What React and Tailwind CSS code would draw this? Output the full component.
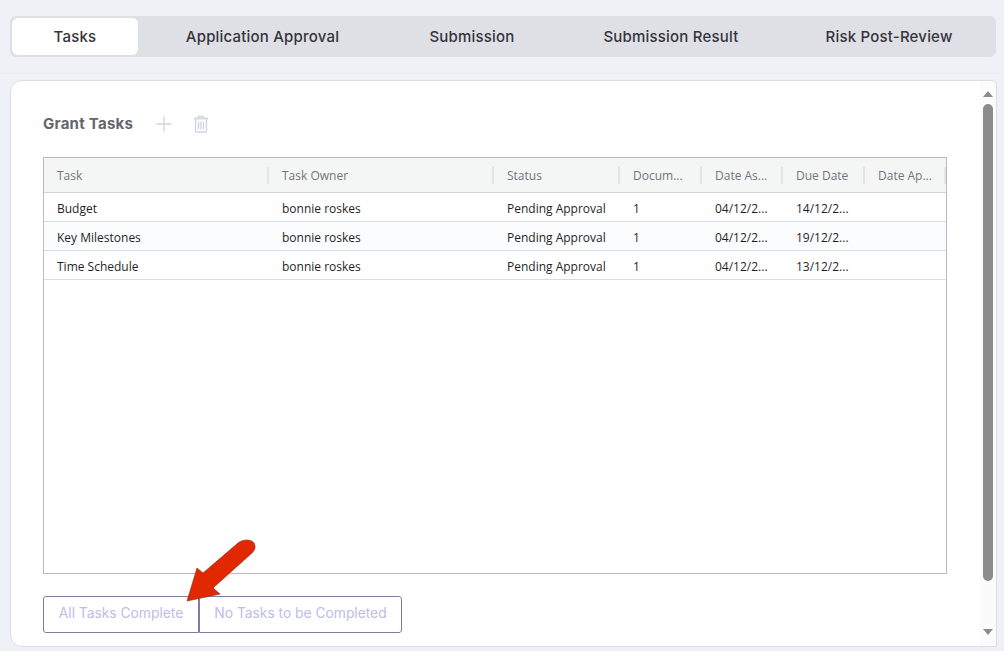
import React from 'react';

const tabs = [
  { label: 'Tasks', width: 'w-[126px]', active: true },
  { label: 'Application Approval', width: 'w-[249px]' },
  { label: 'Submission', width: 'w-[170px]' },
  { label: 'Submission Result', width: 'w-[228px]' },
  { label: 'Risk Post-Review', width: 'w-[208px]' },
];

const columns = ['Task', 'Task Owner', 'Status', 'Docum...', 'Date As...', 'Due Date', 'Date Ap...'];

const rows = [
  { task: 'Budget', due: '14/12/2...' },
  { task: 'Key Milestones', due: '19/12/2...', tint: true },
  { task: 'Time Schedule', due: '13/12/2...' },
];

const gridCols = 'grid grid-cols-[225px_225px_126px_82px_81px_82px_81px]';

const TrashIcon = () => (
  <svg width="16" height="18" viewBox="0 0 16 18" fill="none" stroke="#d3d4e6" strokeWidth="1.4">
    <path d="M1 3.5h14M5.5 3.5V1.5h5v2" />
    <path d="M2.5 3.5h11v12.5a1 1 0 0 1-1 1h-9a1 1 0 0 1-1-1z" />
    <path d="M5.5 6.5v8M8 6.5v8M10.5 6.5v8" />
  </svg>
);

const PlusIcon = () => (
  <svg width="16" height="16" viewBox="0 0 16 16" fill="none" stroke="#d3d4e0" strokeWidth="1.3">
    <path d="M8 .5v15M.5 8h15" />
  </svg>
);

const Arrow = () => (
  <svg className="absolute left-[180px] top-[535px]" width="80" height="72" viewBox="180 535 80 72">
    <path
      d="M187 601 L197 568 L203 573 L238 543 C243 539 251 539 254 543 C256 547 255 550 252 553 L213 588 L220 594 Z"
      fill="#e12800"
      stroke="#8a3a2a"
      strokeWidth="0.7"
      strokeLinejoin="round"
    />
  </svg>
);

const App = () => {
  return (
    <div className="relative h-[651px] w-[1004px] overflow-hidden bg-[#eff1f6] font-['Open_Sans',sans-serif] text-[12px] text-[#1f1f26]">
      {/* Tabs */}
      <div className="pt-4 pl-[10px]">
        <div className="flex h-[41px] w-[986px] items-center rounded-md bg-[#dfe0e6] pl-[2px] font-['Inter',sans-serif] text-[15px] font-medium tracking-[0.2px] text-[#34343c]">
          {tabs.map((tab) => (
            <div
              key={tab.label}
              className={`flex h-[37px] shrink-0 items-center justify-center rounded-md pt-[2px] ${tab.width} ${tab.active ? 'bg-white' : ''}`}
            >
              {tab.label}
            </div>
          ))}
        </div>
      </div>

      <div className="mt-4 h-px bg-[#eaebf0]" />

      {/* Card */}
      <div className="mt-[6px] ml-[10px] flex h-[567px] w-[987px] overflow-hidden rounded-tl-xl rounded-tr-md rounded-bl-xl border border-[#dcdde3] bg-white">
        <div className="flex w-[969px] shrink-0 flex-col pt-[33px] pl-[32px]">
          <div className="flex h-[20px] items-center">
            <h2 className="w-[113px] font-['Inter',sans-serif] text-[15px] font-bold tracking-[0.25px] text-[#65656d]">Grant Tasks</h2>
            <PlusIcon />
            <span className="ml-[21px]">
              <TrashIcon />
            </span>
          </div>

          {/* Table */}
          <div className="mt-[23px] flex h-[417px] w-[904px] flex-col border border-[#b9bac3]">
            <div className={`${gridCols} h-[35px] shrink-0 items-center border-b border-[#d2d4d8] bg-[#f4f6f6] text-[#74747c]`}>
              {columns.map((col) => (
                <div key={col} className="flex h-[17px] items-center border-r-2 border-[#e2e4e6] pt-[2px] pl-[13px]">
                  {col}
                </div>
              ))}
            </div>
            {rows.map((row) => (
              <div
                key={row.task}
                className={`${gridCols} h-[29px] shrink-0 items-center border-b border-[#d8dce0] pt-[4px] ${row.tint ? 'bg-[#fbfcfd]' : 'bg-white'}`}
              >
                <div className="pl-[13px]">{row.task}</div>
                <div className="pl-[13px]">bonnie roskes</div>
                <div className="pl-[13px]">Pending Approval</div>
                <div className="pl-[13px]">1</div>
                <div className="pl-[13px]">04/12/2...</div>
                <div className="pl-[13px]">{row.due}</div>
                <div />
              </div>
            ))}
          </div>

          {/* Buttons */}
          <div className="mt-[22px] flex font-['Inter',sans-serif] text-[13.8px] text-[#bdbdea]">
            <button className="h-[37px] w-[156px] rounded-l-[3px] border border-[#7f7d9f] pb-[2px]">All Tasks Complete</button>
            <button className="h-[37px] w-[203px] rounded-r-[3px] border border-[#7f7d9f] pb-[2px]">No Tasks to be Completed</button>
          </div>
        </div>

        {/* Scrollbar */}
        <div className="flex w-[16px] shrink-0 flex-col items-center bg-[#fbfbfb] pt-[10px]">
          <div className="h-0 w-0 border-x-[5px] border-b-[6px] border-x-transparent border-b-[#8c8c8c]" />
          <div className="mt-[7px] h-[477px] w-[10px] rounded-[5px] bg-[#8c8c8c]" />
          <div className="mt-[48px] h-0 w-0 border-x-[5px] border-t-[6px] border-x-transparent border-t-[#8c8c8c]" />
        </div>
      </div>

      <Arrow />
    </div>
  );
};

export default App;
